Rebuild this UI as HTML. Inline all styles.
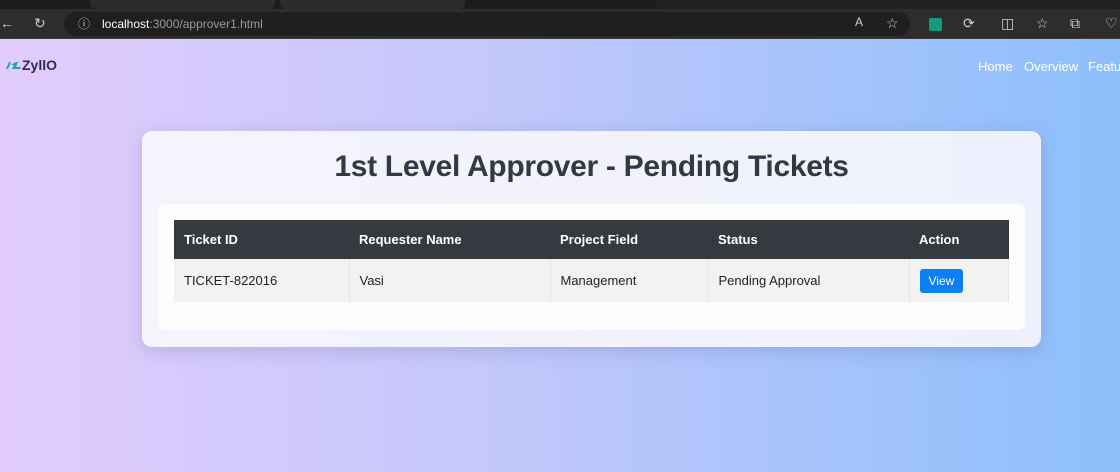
<!DOCTYPE html>
<html><head><style>
*{margin:0;padding:0;box-sizing:border-box}
body{width:1120px;height:472px;overflow:hidden;font-family:"Liberation Sans",sans-serif;position:relative;background:linear-gradient(90deg,#e2ccfc 0%,#c7c8fb 40%,#a9c4fb 70%,#8dbffb 100%)}
.tabs{position:absolute;left:0;top:0;width:1120px;height:9px;background:#1c1c1c}
.tabs .t{position:absolute;top:0;height:9px;background:#2b2b2b;border-radius:0 0 6px 6px}
.bar{position:absolute;left:0;top:9px;width:1120px;height:30px;background:#2d2d2d;border-bottom:1px solid #3a3a3a}
.url{position:absolute;left:64px;top:3px;width:846px;height:24px;border-radius:12px;background:#1f1f1f;color:#fff;font-size:12px;line-height:24px;padding-left:38px}
.url span{color:#9a9a9a}
.ic{position:absolute;color:#cfcfcf;font-size:14px;top:6px}
.logo{position:absolute;left:22px;top:57px;font-weight:bold;font-size:14px;color:#2d2d55}
.nav{position:absolute;top:59px;font-size:13px;color:#fff}
.card{position:absolute;left:142px;top:131px;width:899px;height:216px;border-radius:10px;background:linear-gradient(90deg,#f5f4fc,#eef1fd);box-shadow:0 4px 18px rgba(90,90,160,.25)}
h1{position:absolute;left:0;width:899px;top:19px;text-align:center;font-size:30px;color:#333940;font-weight:bold;letter-spacing:-0.3px}
.panel{position:absolute;left:16px;top:73px;width:867px;height:126px;background:#fdfdfd;border-radius:7px}
table{position:absolute;left:16px;top:16px;width:835px;border-collapse:collapse;font-size:13px}
th{background:#343a40;color:#fff;text-align:left;height:39px;padding-left:10px;font-weight:bold}
td{background:#f2f2f2;height:43px;padding-left:10px;color:#222;border-right:1px solid #e6e6e6}
.btn{display:inline-block;background:#0d7ff5;color:#fff;font-size:12px;padding:5px 9px;border-radius:3px}
</style></head><body>
<div class="tabs"><div class="t" style="left:90px;width:185px"></div><div class="t" style="left:280px;width:185px"></div><div class="t" style="left:655px;width:465px;background:#222"></div></div>
<div class="bar">
<div class="ic" style="left:0">←</div><div class="ic" style="left:34px">↻</div>
<div class="url"><span style="position:absolute;left:14px;color:#ccc">ⓘ</span>localhost<span>:3000/approver1.html</span></div>
<div class="ic" style="left:855px;font-size:12px">A</div><div class="ic" style="left:886px">☆</div>
<div style="position:absolute;left:929px;top:9px;width:13px;height:13px;background:#139a7c;border-radius:2px"></div>
<div class="ic" style="left:963px">⟳</div><div class="ic" style="left:1001px">◫</div><div class="ic" style="left:1036px">☆</div><div class="ic" style="left:1070px">⧉</div><div class="ic" style="left:1105px">♡</div>
</div>
<svg style="position:absolute;left:3px;top:60px" width="18" height="10" viewBox="0 0 18 10"><path d="M0 2h6L3 9h2l3-7h-2z M8 5h3l-2 4h8l1-2h-5l2-5h-2z" fill="#1fa3b8"/></svg>
<div class="logo">ZyllO</div>
<div class="nav" style="left:978px">Home</div>
<div class="nav" style="left:1024px">Overview</div>
<div class="nav" style="left:1088px">Features</div>
<div class="card">
<h1>1st Level Approver - Pending Tickets</h1>
<div class="panel"><table>
<tr><th style="width:175px">Ticket ID</th><th style="width:201px">Requester Name</th><th style="width:158px">Project Field</th><th style="width:201px">Status</th><th>Action</th></tr>
<tr><td>TICKET-822016</td><td>Vasi</td><td>Management</td><td>Pending Approval</td><td><span class="btn">View</span></td></tr>
</table></div>
</div>
</body></html>
